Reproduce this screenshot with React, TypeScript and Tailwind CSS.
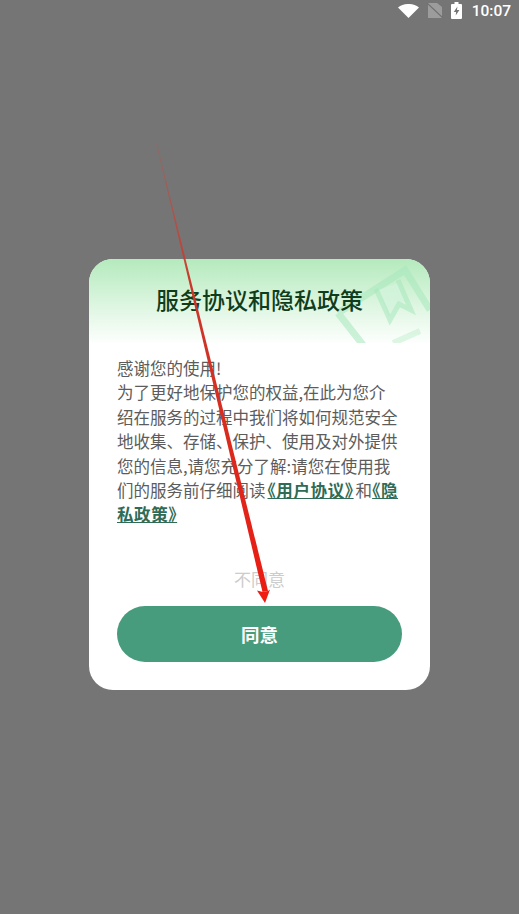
const cjk = "font-['Noto_Sans_CJK_SC','Liberation_Sans',sans-serif]";
const link = "font-bold text-[#2f6b55] underline tracking-[0.6px] [font-feature-settings:'palt']";

function StatusBar() {
  return (
    <div className="flex h-6 items-center justify-end pr-[8px] text-white">
      {/* wifi */}
      <svg width="21" height="14" viewBox="0 0 21 14" className="mr-[8px] mb-[3px]">
        <path d="M0 3.5C5.8-1.2 15.2-1.2 21 3.5L10.5 14z" fill="#fff" />
      </svg>
      {/* no sim */}
      <svg width="16" height="15" viewBox="0 0 16 15" className="mr-[8px] mb-[3px]">
        <path d="M1 0h9l5 4v11H1z" fill="#9c9c9c" />
        <path d="M0 0l16 15" stroke="#6f6f6f" strokeWidth="1.2" />
      </svg>
      {/* battery charging */}
      <svg width="11" height="17" viewBox="0 0 11 17" className="mr-[10px] mb-[3px]">
        <path d="M3.5 0h4v2h2.5a1 1 0 0 1 1 1v13a1 1 0 0 1-1 1H1a1 1 0 0 1-1-1V3a1 1 0 0 1 1-1h2.5z" fill="#fff" />
        <path d="M6.4 4.5L2.8 10h2.3l-.4 3.5L8.4 8H6z" fill="#757575" />
      </svg>
      <span className="mb-[1px] text-[15.5px] leading-none font-['Roboto',sans-serif] font-medium">10:07</span>
    </div>
  );
}

function HeaderDecor() {
  return (
    <svg width="100" height="84" viewBox="0 0 100 84" className="absolute right-0 top-0" fill="none">
      <path d="M8 54L75 11L100 51M8 54L33 86" stroke="#a6e8bb" strokeOpacity="0.55" strokeWidth="7" />
      <path d="M48 31L68 24L78 43L68 43L59 58z" fill="#d2f4dc" fillOpacity="0.7" />
      <path d="M46 30L60 61L69 45L81 51L68 21" stroke="#a6e8bb" strokeOpacity="0.55" strokeWidth="5" />
      <path d="M63 84L90 72" stroke="#b8eec8" strokeOpacity="0.45" strokeWidth="6" />
    </svg>
  );
}

export default function App() {
  return (
    <div className={`relative h-[914px] w-[519px] overflow-hidden bg-[#757575] ${cjk}`}>
      <StatusBar />

      {/* 弹窗 */}
      <div className="ml-[89px] mt-[235px] h-[431px] w-[341px] overflow-hidden rounded-[24px] bg-white">
        <div className="relative h-[86px] bg-gradient-to-b from-[#b4eabd] to-white">
          <HeaderDecor />
          <h1 className="relative pt-[22px] text-center text-[23px] leading-[36px] font-medium text-[#0f3d1c]">
            服务协议和隐私政策
          </h1>
        </div>

        <div className="px-[28px] pt-[11px] text-[16.5px] leading-[24.4px] text-[#5c5c5c]">
          <p className="h-[171px] whitespace-nowrap">
            感谢您的使用!
            <br />
            为了更好地保护您的权益,在此为您介
            <br />
            绍在服务的过程中我们将如何规范安全
            <br />
            地收集、存储、保护、使用及对外提供
            <br />
            您的信息,请您充分了解:请您在使用我
            <br />
            们的服务前仔细阅读
            <span className={`${link} ml-[2px] mr-[2px]`}>《用户协议》</span>
            和
            <span className={link}>《隐</span>
            <br />
            <span className={link}>私政策》</span>
          </p>

          <div className="mt-[40px] text-center text-[17px] leading-[24px] text-[#cccccc]">不同意</div>

          <button className="mt-[15px] block h-[56px] w-[285px] rounded-full bg-[#479c7e] text-center text-[18.5px] font-bold text-white">
            同意
          </button>
        </div>
      </div>

      {/* 红色标注箭头 */}
      <svg width="519" height="914" viewBox="0 0 519 914" className="pointer-events-none absolute left-0 top-0">
        <defs>
          <linearGradient id="shaft" x1="0" y1="143" x2="0" y2="592" gradientUnits="userSpaceOnUse">
            <stop offset="0" stopColor="#b8564e" stopOpacity="0.4" />
            <stop offset="0.3" stopColor="#c9392c" />
            <stop offset="1" stopColor="#ea1c12" />
          </linearGradient>
        </defs>
        <path d="M156 143L262.5 592L268 591L156.8 143z" fill="url(#shaft)" />
        <path d="M265 603L257 590.5L263 592L268 591L270 589.5z" fill="#ee1c12" />
      </svg>
    </div>
  );
}
